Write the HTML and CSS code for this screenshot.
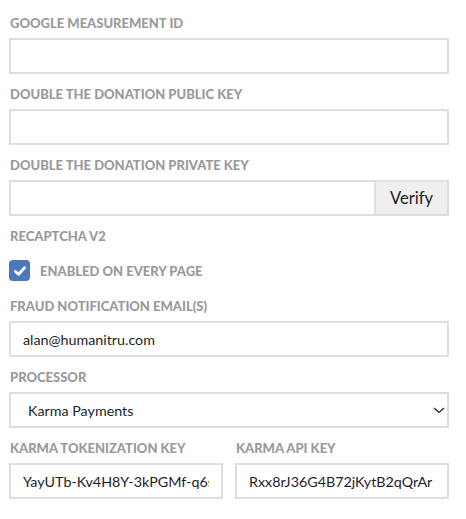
FILE: index.html
```html
<!DOCTYPE html>
<html>
<head>
<meta charset="utf-8">
<link rel="stylesheet" href="styles.css">
</head>
<body>
<form class="settings">
  <div class="field">
    <label class="label">Google Measurement ID</label>
    <input class="input" type="text" value="">
  </div>
  <div class="field">
    <label class="label">Double the Donation Public Key</label>
    <input class="input" type="text" value="">
  </div>
  <div class="field">
    <label class="label">Double the Donation Private Key</label>
    <div class="input-group">
      <input class="input grow" type="text" value="">
      <button class="btn" type="button">Verify</button>
    </div>
  </div>
  <div class="field">
    <label class="label">Recaptcha V2</label>
    <div class="check-row">
      <span class="checkbox">
        <svg width="14" height="14" viewBox="0 0 14 14"><path d="M2.4 7.4 L5.5 10.3 L11.6 3.7" fill="none" stroke="#fff" stroke-width="2.8" stroke-linecap="round" stroke-linejoin="round"/></svg>
      </span>
      <span class="check-label">Enabled on every page</span>
    </div>
  </div>
  <div class="field">
    <label class="label">Fraud Notification Email(s)</label>
    <input class="input" type="text" value="alan@humanitru.com">
  </div>
  <div class="field">
    <label class="label">Processor</label>
    <div class="select-wrap">
      <select class="input select">
        <option>Karma Payments</option>
      </select>
      <svg class="chevron" width="12" height="7" viewBox="0 0 12 7"><path d="M1 1 L6 5.5 L11 1" fill="none" stroke="#222" stroke-width="1.3"/></svg>
    </div>
  </div>
  <div class="row">
    <div class="field col">
      <label class="label">Karma Tokenization Key</label>
      <input class="input" type="text" value="YayUTb-Kv4H8Y-3kPGMf-q6sT9d">
    </div>
    <div class="field col">
      <label class="label">Karma API Key</label>
      <input class="input" type="text" value="Rxx8rJ36G4B72jKytB2qQrAr">
    </div>
  </div>
</form>
</body>
</html>
```

FILE: styles.css
```css
* { box-sizing: border-box; }
html, body { margin: 0; padding: 0; background: #fff; }
body { font-family: Lato, "Open Sans", sans-serif; }
.settings {
  width: 440px;
  margin-left: 9px;
  padding-top: 15px;
}
.field {
  display: flex;
  flex-direction: column;
  margin-bottom: 12px;
}
.label {
  font-size: 13px;
  line-height: 16px;
  font-weight: 900;
  text-transform: uppercase;
  color: #9a9a9a;
  margin-bottom: 7px;
  padding-left: 1px;
  white-space: nowrap;
}
.input {
  display: block;
  width: 100%;
  height: 36px;
  border: 2px solid #dedede;
  border-radius: 0;
  background: #fff;
  font-family: Lato, "Open Sans", sans-serif;
  font-size: 14.3px;
  color: #1e1e1e;
  padding: 0 12px;
  outline: none;
  margin: 0;
}
.input-group { display: flex; }
.grow { flex: 1; width: auto; min-width: 0; border-right: 1px solid #dedede; }
.btn {
  width: 74px;
  height: 36px;
  border: 2px solid #dedede;
  border-left: 1px solid #dedede;
  background: #efefef;
  font-family: Lato, "Open Sans", sans-serif;
  font-size: 16.5px;
  color: #222;
  padding: 0;
  margin: 0;
}
.check-row {
  display: flex;
  align-items: center;
  height: 35px;
  padding-top: 4px;
}
.checkbox {
  width: 21px;
  height: 21px;
  border-radius: 4px;
  background: #4a78b8;
  display: flex;
  align-items: center;
  justify-content: center;
}
.check-label {
  margin-left: 10px;
  font-size: 13px;
  font-weight: 900;
  text-transform: uppercase;
  color: #9a9a9a;
}
.select-wrap { position: relative; }
.select {
  appearance: none;
  -webkit-appearance: none;
  padding-left: 17px;
}
.chevron {
  position: absolute;
  right: 4px;
  top: 15px;
}
.row {
  display: grid;
  grid-template-columns: 1fr 1fr;
  column-gap: 12px;
}
```
